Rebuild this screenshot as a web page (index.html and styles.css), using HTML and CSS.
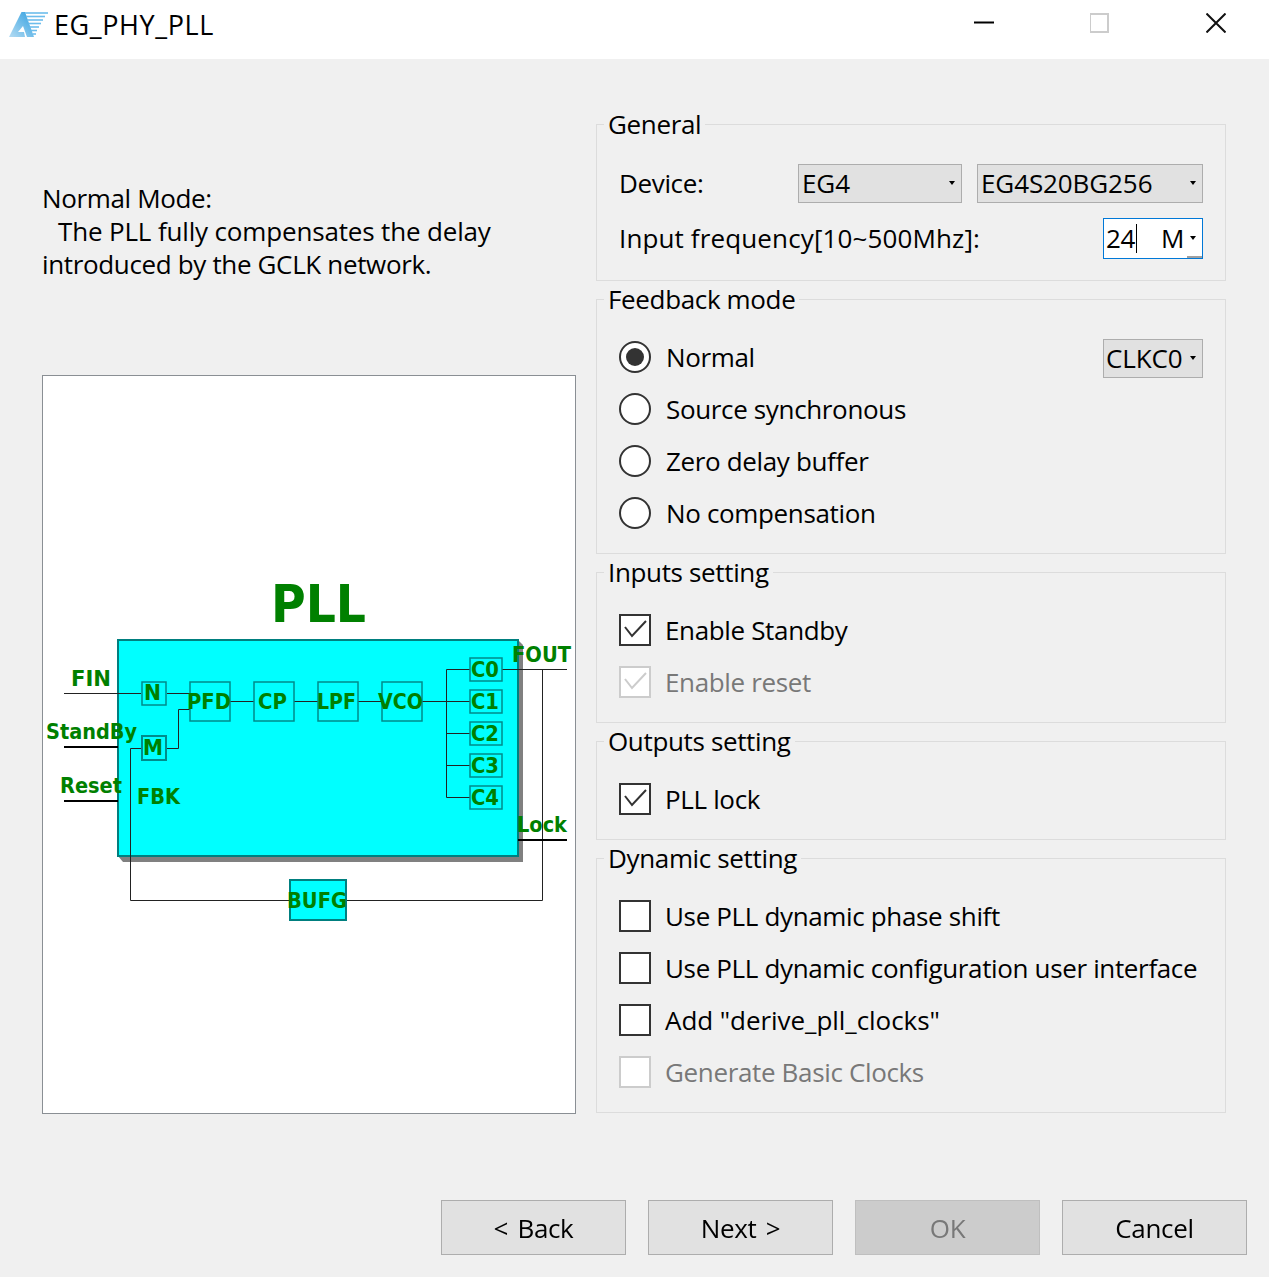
FILE: index.html
```html
<!DOCTYPE html>
<html lang="en">
<head>
    <meta charset="UTF-8">
    <meta name="viewport" content="width=device-width, initial-scale=1.0">
    <title>EG_PHY_PLL</title>
    <link rel="stylesheet" href="styles.css">
</head>
<body>
    <header class="titlebar">
        <svg class="app-icon" width="40" height="28" viewBox="0 0 40 28">
            <defs>
                <linearGradient id="logoFill" x1="0" y1="1" x2="1" y2="0">
                    <stop offset="0" stop-color="#b5dcf3"/>
                    <stop offset="1" stop-color="#2f9fe0"/>
                </linearGradient>
            </defs>
            <path d="M0 26 L12.5 1 L16 1 L25 26 L18 26 L14 15 L9 21 L15 21 L16 26 Z" fill="url(#logoFill)"/>
            <g stroke="#6cbdec" stroke-width="1.6">
                <line x1="16" y1="2" x2="39" y2="2"/>
                <line x1="17" y1="5.5" x2="36" y2="5.5"/>
                <line x1="18" y1="9" x2="34" y2="9"/>
                <line x1="19.5" y1="12.5" x2="32" y2="12.5"/>
                <line x1="20.5" y1="16" x2="30" y2="16"/>
                <line x1="22" y1="19.5" x2="28" y2="19.5"/>
                <line x1="23.5" y1="23" x2="27" y2="23"/>
            </g>
        </svg>
        <span class="app-title">EG_PHY_PLL</span>
        <div class="window-btns">
            <svg width="20" height="20" viewBox="0 0 20 20"><line x1="0" y1="9.5" x2="20" y2="9.5" stroke="#000" stroke-width="2"/></svg>
            <svg width="20" height="20" viewBox="1 0 20 20"><rect x="1" y="1" width="18" height="18" fill="none" stroke="#ccc" stroke-width="2"/></svg>
            <svg width="20" height="20" viewBox="0 0 20 20"><path d="M0.5 0.5 L19.5 19.5 M19.5 0.5 L0.5 19.5" stroke="#111" stroke-width="2" fill="none"/></svg>
        </div>
    </header>

    <main class="content">
        <section class="left-col">
            <p class="mode-desc">Normal Mode:<br><span class="indent">The PLL fully compensates the delay</span><br>introduced by the GCLK network.</p>
            <div class="diagram">
                <svg width="532" height="737" viewBox="43 376 532 737">
                    <!-- main block -->
                    <path d="M118 856 L123 862 L523 862 L523 645 L518 640 Z" fill="#808080"/>
                    <rect x="118" y="640" width="400" height="216" fill="#00ffff" stroke="#007f7f" stroke-width="2"/>

                    <!-- wires -->
                    <g class="wire">
                        <path d="M64 693.5 H141 M167 693.5 H190"/>
                        <path d="M230 701.5 H254 M294 701.5 H318 M358 701.5 H382 M422 701.5 H470"/>
                        <path d="M166 748.5 H178.5 V709.5 H190"/>
                        <path d="M141 748.5 H130.5 V900.5 H290 M346 900.5 H542.5 V669.5"/>
                        <path d="M502 669.5 H567"/>
                        <path d="M470 669.5 H446.5 V797.5 H470 M446.5 733.5 H470 M446.5 765.5 H470"/>
                    </g>
                    <g class="wire-thick">
                        <path d="M64 747 H118 M64 801 H118 M518 840 H567"/>
                    </g>

                    <!-- sub blocks -->
                    <g class="sub">
                        <rect x="142" y="682" width="24" height="23"/>
                        <rect class="sub-m" x="142" y="736" width="24" height="24"/>
                        <rect x="190" y="682" width="40" height="39"/>
                        <rect x="254" y="682" width="40" height="39"/>
                        <rect x="318" y="682" width="40" height="39"/>
                        <rect x="382" y="682" width="40" height="39"/>
                        <rect x="470" y="658" width="32" height="23"/>
                        <rect x="470" y="690" width="32" height="23"/>
                        <rect x="470" y="722" width="32" height="23"/>
                        <rect x="470" y="754" width="32" height="23"/>
                        <rect x="470" y="786" width="32" height="23"/>
                    </g>
                    <rect class="bufg" x="290" y="880" width="56" height="40"/>

                    <!-- labels -->
                    <g class="dia-text">
                        <text class="pll" x="271" y="622" textLength="95" lengthAdjust="spacingAndGlyphs">PLL</text>
                        <text x="71" y="686" textLength="40" lengthAdjust="spacingAndGlyphs">FIN</text>
                        <text x="46" y="739" textLength="91" lengthAdjust="spacingAndGlyphs">StandBy</text>
                        <text x="60" y="793" textLength="62" lengthAdjust="spacingAndGlyphs">Reset</text>
                        <text x="137" y="804" textLength="43" lengthAdjust="spacingAndGlyphs">FBK</text>
                        <text x="144" y="700" textLength="17" lengthAdjust="spacingAndGlyphs">N</text>
                        <text x="143" y="755" textLength="20" lengthAdjust="spacingAndGlyphs">M</text>
                        <text x="187" y="709" textLength="44" lengthAdjust="spacingAndGlyphs">PFD</text>
                        <text x="258" y="709" textLength="29" lengthAdjust="spacingAndGlyphs">CP</text>
                        <text x="317" y="709" textLength="39" lengthAdjust="spacingAndGlyphs">LPF</text>
                        <text x="378" y="709" textLength="45" lengthAdjust="spacingAndGlyphs">VCO</text>
                        <text x="471" y="677" textLength="28" lengthAdjust="spacingAndGlyphs">C0</text>
                        <text x="471" y="709" textLength="28" lengthAdjust="spacingAndGlyphs">C1</text>
                        <text x="471" y="741" textLength="28" lengthAdjust="spacingAndGlyphs">C2</text>
                        <text x="471" y="773" textLength="28" lengthAdjust="spacingAndGlyphs">C3</text>
                        <text x="471" y="805" textLength="28" lengthAdjust="spacingAndGlyphs">C4</text>
                        <text x="512" y="662" textLength="59" lengthAdjust="spacingAndGlyphs">FOUT</text>
                        <text x="517" y="832" textLength="50" lengthAdjust="spacingAndGlyphs">Lock</text>
                        <text x="287" y="908" textLength="60" lengthAdjust="spacingAndGlyphs">BUFG</text>
                    </g>
                </svg>
            </div>
        </section>

        <section class="right-col">
            <fieldset class="group group-general">
                <legend>General</legend>
                <div class="field-row device-row">
                    <label class="device-label">Device:</label>
                    <div class="combo combo-family">EG4<span class="arrow"></span></div>
                    <div class="combo combo-device">EG4S20BG256<span class="arrow"></span></div>
                </div>
                <div class="field-row freq-row">
                    <label class="freq-label">Input frequency[10~500Mhz]:</label>
                    <div class="spin"><span class="spin-value">24</span><span class="caret"></span><span class="spin-unit">M</span><span class="arrow"></span><span class="spin-corner"></span></div>
                </div>
            </fieldset>

            <fieldset class="group">
                <legend>Feedback mode</legend>
                <div class="opt"><span class="radio checked"></span><span class="opt-text">Normal</span><div class="combo combo-clk">CLKC0<span class="arrow"></span></div></div>
                <div class="opt"><span class="radio"></span><span class="opt-text">Source synchronous</span></div>
                <div class="opt"><span class="radio"></span><span class="opt-text">Zero delay buffer</span></div>
                <div class="opt"><span class="radio"></span><span class="opt-text">No compensation</span></div>
            </fieldset>

            <fieldset class="group">
                <legend>Inputs setting</legend>
                <div class="opt"><span class="check"><svg width="28" height="28" viewBox="0 0 28 28"><path d="M4 11 L11 20 L25 5" class="tick"/></svg></span><span class="opt-text">Enable Standby</span></div>
                <div class="opt disabled"><span class="check"><svg width="28" height="28" viewBox="0 0 28 28"><path d="M4 11 L11 20 L25 5" class="tick"/></svg></span><span class="opt-text">Enable reset</span></div>
            </fieldset>

            <fieldset class="group">
                <legend>Outputs setting</legend>
                <div class="opt"><span class="check"><svg width="28" height="28" viewBox="0 0 28 28"><path d="M4 11 L11 20 L25 5" class="tick"/></svg></span><span class="opt-text">PLL lock</span></div>
            </fieldset>

            <fieldset class="group">
                <legend>Dynamic setting</legend>
                <div class="opt"><span class="check"></span><span class="opt-text">Use PLL dynamic phase shift</span></div>
                <div class="opt"><span class="check"></span><span class="opt-text">Use PLL dynamic configuration user interface</span></div>
                <div class="opt"><span class="check"></span><span class="opt-text opt-wide">Add "derive_pll_clocks"</span></div>
                <div class="opt disabled"><span class="check"></span><span class="opt-text">Generate Basic Clocks</span></div>
            </fieldset>
        </section>
    </main>

    <footer class="buttons">
        <button class="btn">&lt; Back</button>
        <button class="btn">Next &gt;</button>
        <button class="btn" disabled>OK</button>
        <button class="btn">Cancel</button>
    </footer>
</body>
</html>
```

FILE: styles.css
```css
* {
    box-sizing: border-box;
}
html, body {
    height: 100%;
}
body {
    margin: 0;
    background-color: #f0f0f0;
    color: #000;
    font-family: "Open Sans", "Noto Sans", Arial, sans-serif;
    font-size: 26px;
    letter-spacing: -0.35px;
    overflow: hidden;
}

/* title bar */
.titlebar {
    display: flex;
    align-items: center;
    height: 59px;
    background-color: #fff;
    padding-left: 9px;
}
.app-icon {
    margin-right: 5px;
    margin-top: -9px;
}
.app-title {
    margin-top: -11px;
    font-size: 27px;
    letter-spacing: 0.6px;
}
.window-btns {
    display: flex;
    gap: 96px;
    margin-left: auto;
    margin-right: 43px;
    margin-top: -13px;
}
.window-btns svg {
    display: block;
}

/* main area */
.content {
    display: flex;
    gap: 20px;
    padding: 47px 43px 0 42px;
}
.left-col {
    width: 534px;
    flex-shrink: 0;
}
.mode-desc {
    margin: 76px 0 94px 0;
    line-height: 33px;
    height: 99px;
}
.indent {
    padding-left: 16px;
    letter-spacing: -0.16px;
}
.diagram {
    width: 534px;
    height: 739px;
    background-color: #fff;
    border: 1px solid #8a8f94;
}
.diagram svg {
    display: block;
}
.wire path {
    fill: none;
    stroke: #222;
    stroke-width: 1;
}
.wire-thick path {
    fill: none;
    stroke: #000;
    stroke-width: 2;
}
.sub rect {
    fill: none;
    stroke: #008b8b;
    stroke-width: 1.5;
}
.sub .sub-m {
    stroke-width: 2;
}
.bufg {
    fill: #00ffff;
    stroke: #007f7f;
    stroke-width: 2;
}
.dia-text text {
    fill: #008000;
    font-family: "DejaVu Sans", sans-serif;
    font-weight: bold;
    font-size: 22px;
    letter-spacing: 0;
}
.dia-text .pll {
    font-size: 52px;
}

/* right side groups */
.right-col {
    width: 630px;
    flex-shrink: 0;
}
.group {
    margin: 0;
    padding: 14px 22px 14px 22px;
    border: 1px solid #dcdcdc;
    min-width: 0;
}
.group legend {
    margin-left: -15px;
    padding: 0 4px;
    height: 36px;
    line-height: 36px;
}
.field-row {
    display: flex;
    align-items: center;
}
.device-row {
    height: 40px;
    margin-top: 7px;
}
.freq-row {
    height: 42px;
    margin-top: 14px;
    margin-bottom: 7px;
    justify-content: space-between;
}
.device-label {
    width: 179px;
}
.freq-label {
    letter-spacing: 0.13px;
}
.combo {
    display: flex;
    align-items: center;
    height: 39px;
    padding-left: 3px;
    background-color: #e1e1e1;
    border: 1px solid #adadad;
    letter-spacing: -0.1px;
    position: relative;
}
.combo-family {
    width: 164px;
    margin-right: 15px;
}
.combo-device {
    width: 226px;
}
.combo-clk {
    width: 100px;
    margin-left: auto;
    margin-top: 2px;
    padding-left: 2px;
}
.arrow {
    position: absolute;
    right: 6px;
    top: 50%;
    margin-top: -2px;
    border-left: 3.5px solid transparent;
    border-right: 3.5px solid transparent;
    border-top: 4px solid #000;
}
.spin {
    display: flex;
    align-items: center;
    width: 100px;
    height: 41px;
    padding-left: 2px;
    background-color: #fff;
    border: 1px solid #0078d7;
    position: relative;
}
.caret {
    width: 1px;
    height: 29px;
    margin-left: 1px;
    background-color: #000;
}
.spin-unit {
    margin-left: 24px;
}
.spin-corner {
    position: absolute;
    right: 0;
    bottom: 0;
    width: 15px;
    height: 2px;
    background-color: #a0a0a0;
}
.opt {
    display: flex;
    align-items: center;
    height: 52px;
}
.opt-wide {
    letter-spacing: -0.05px;
}
.radio {
    width: 32px;
    height: 32px;
    margin-right: 15px;
    border: 2px solid #333;
    border-radius: 50%;
    background-color: #fff;
    display: flex;
    align-items: center;
    justify-content: center;
}
.radio.checked::after {
    content: "";
    width: 18px;
    height: 18px;
    border-radius: 50%;
    background-color: #333;
}
.check {
    display: block;
    width: 32px;
    height: 32px;
    margin-right: 14px;
    border: 2px solid #333;
    background-color: #fff;
}
.check svg {
    display: block;
}
.tick {
    fill: none;
    stroke: #333;
    stroke-width: 2;
}
.opt.disabled {
    color: #787878;
}
.opt.disabled .check {
    border-color: #ccc;
}
.opt.disabled .tick {
    stroke: #ccc;
}

/* bottom buttons */
.buttons {
    display: flex;
    justify-content: flex-end;
    gap: 22px;
    position: fixed;
    left: 0;
    right: 22px;
    bottom: 22px;
}
.btn {
    width: 185px;
    height: 55px;
    font: inherit;
    letter-spacing: inherit;
    word-spacing: 3px;
    color: #000;
    background-color: #e1e1e1;
    border: 1px solid #adadad;
    padding: 0;
}
.btn:disabled {
    color: #787878;
    background-color: #ccc;
    border-color: #bfbfbf;
}
```
